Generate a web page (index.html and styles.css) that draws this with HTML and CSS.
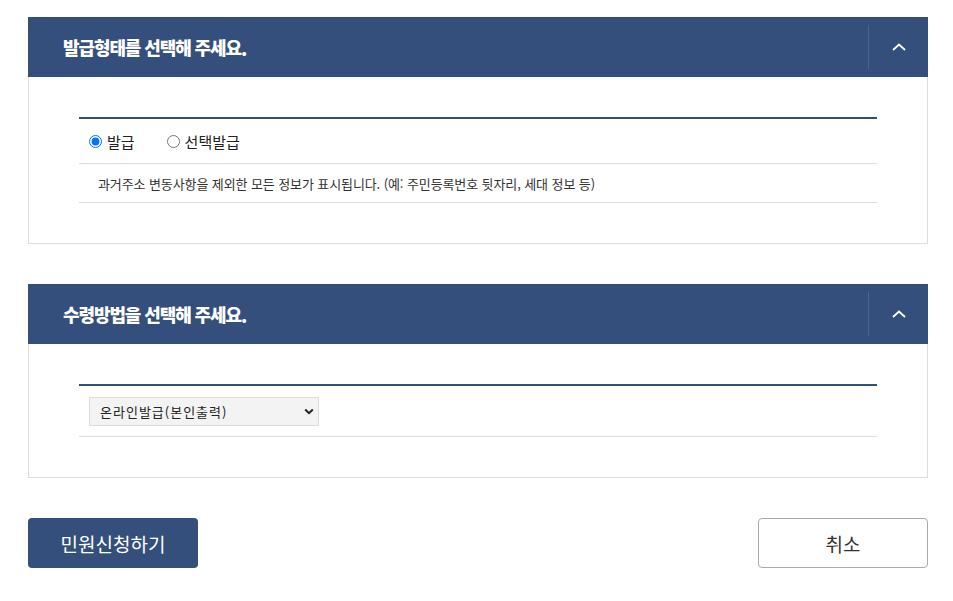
FILE: index.html
```html
<!DOCTYPE html>
<html lang="ko">
<head>
<meta charset="utf-8">
<title>민원신청</title>
<link rel="stylesheet" href="styles.css">
</head>
<body>
<div class="page">
  <section class="panel">
    <div class="panel-head">
      <h2 class="panel-title">발급형태를 선택해 주세요.</h2>
      <button class="toggle" type="button" aria-label="접기">
        <svg width="14" height="8" viewBox="0 0 14 8"><path d="M1 7 L7 1.5 L13 7" fill="none" stroke="#fff" stroke-width="1.8"/></svg>
      </button>
    </div>
    <div class="panel-body">
      <div class="table">
        <div class="row radio-row">
          <label class="radio"><input type="radio" name="type" checked><span>발급</span></label>
          <label class="radio"><input type="radio" name="type"><span>선택발급</span></label>
        </div>
        <div class="row desc-row">과거주소 변동사항을 제외한 모든 정보가 표시됩니다. (예: 주민등록번호 뒷자리, 세대 정보 등)</div>
      </div>
    </div>
  </section>

  <section class="panel">
    <div class="panel-head">
      <h2 class="panel-title">수령방법을 선택해 주세요.</h2>
      <button class="toggle" type="button" aria-label="접기">
        <svg width="14" height="8" viewBox="0 0 14 8"><path d="M1 7 L7 1.5 L13 7" fill="none" stroke="#fff" stroke-width="1.8"/></svg>
      </button>
    </div>
    <div class="panel-body">
      <div class="table">
        <div class="row select-row">
          <div class="select">
            <span>온라인발급(본인출력)</span>
            <svg width="10" height="7" viewBox="0 0 10 7"><path d="M1.2 1.5 L5 5.2 L8.8 1.5" fill="none" stroke="#222" stroke-width="2"/></svg>
          </div>
        </div>
      </div>
    </div>
  </section>

  <div class="actions">
    <button class="btn btn-primary" type="button">민원신청하기</button>
    <button class="btn btn-default" type="button">취소</button>
  </div>
</div>
</body>
</html>
```
FILE: styles.css
```css
* { box-sizing: border-box; }
body {
  margin: 0;
  background: #fff;
  font-family: "Noto Sans CJK KR", "Noto Sans", sans-serif;
  color: #222;
}
.page {
  width: 900px;
  margin: 17px 0 0 28px;
}
.panel { margin-bottom: 40px; }
.panel + .panel { margin-bottom: 0; }
.panel-head {
  height: 60px;
  background: #344f7b;
  display: flex;
  align-items: center;
  justify-content: space-between;
  padding-left: 35px;
}
.panel-title {
  margin: 0;
  color: #fff;
  font-size: 18px;
  font-weight: 900;
  letter-spacing: -1.1px;
}
.toggle {
  width: 60px;
  height: 44px;
  border: 0;
  border-left: 1px solid #4a6390;
  background: transparent;
  display: flex;
  align-items: center;
  justify-content: center;
  padding: 0;
}
.panel-body {
  border: 1px solid #dcdcdc;
  border-top: 0;
  padding: 40px 50px;
}
.table { border-top: 2px solid #344f7b; }
.row { border-bottom: 1px solid #dcdcdc; }
.radio-row {
  height: 45px;
  display: flex;
  align-items: center;
  gap: 32px;
  padding-left: 10px;
}
.radio {
  display: flex;
  align-items: center;
  gap: 5px;
  font-size: 15px;
  color: #222;
}
.radio input {
  margin: 0;
  width: 13px;
  height: 13px;
}
.desc-row {
  height: 39px;
  display: flex;
  align-items: center;
  padding-left: 19px;
  font-size: 13px;
  color: #333;
  letter-spacing: -0.1px;
}
.select-row {
  padding: 11px 10px 10px;
}
.select {
  width: 230px;
  height: 29px;
  background: #f3f3f3;
  border: 1px solid #dcdcdc;
  display: flex;
  align-items: center;
  justify-content: space-between;
  padding: 0 4px 0 10px;
  font-size: 13px;
  letter-spacing: 1px;
  color: #222;
}
.actions {
  margin-top: 40px;
  display: flex;
  justify-content: space-between;
}
.btn {
  width: 170px;
  height: 50px;
  border-radius: 4px;
  font-family: "Noto Sans CJK KR", "Noto Sans", sans-serif;
  font-size: 19px;
  cursor: pointer;
}
.btn-primary {
  background: #344f7b;
  color: #fff;
  border: 0;
}
.btn-default {
  background: #fff;
  color: #333;
  border: 1px solid #aaa;
}
```
